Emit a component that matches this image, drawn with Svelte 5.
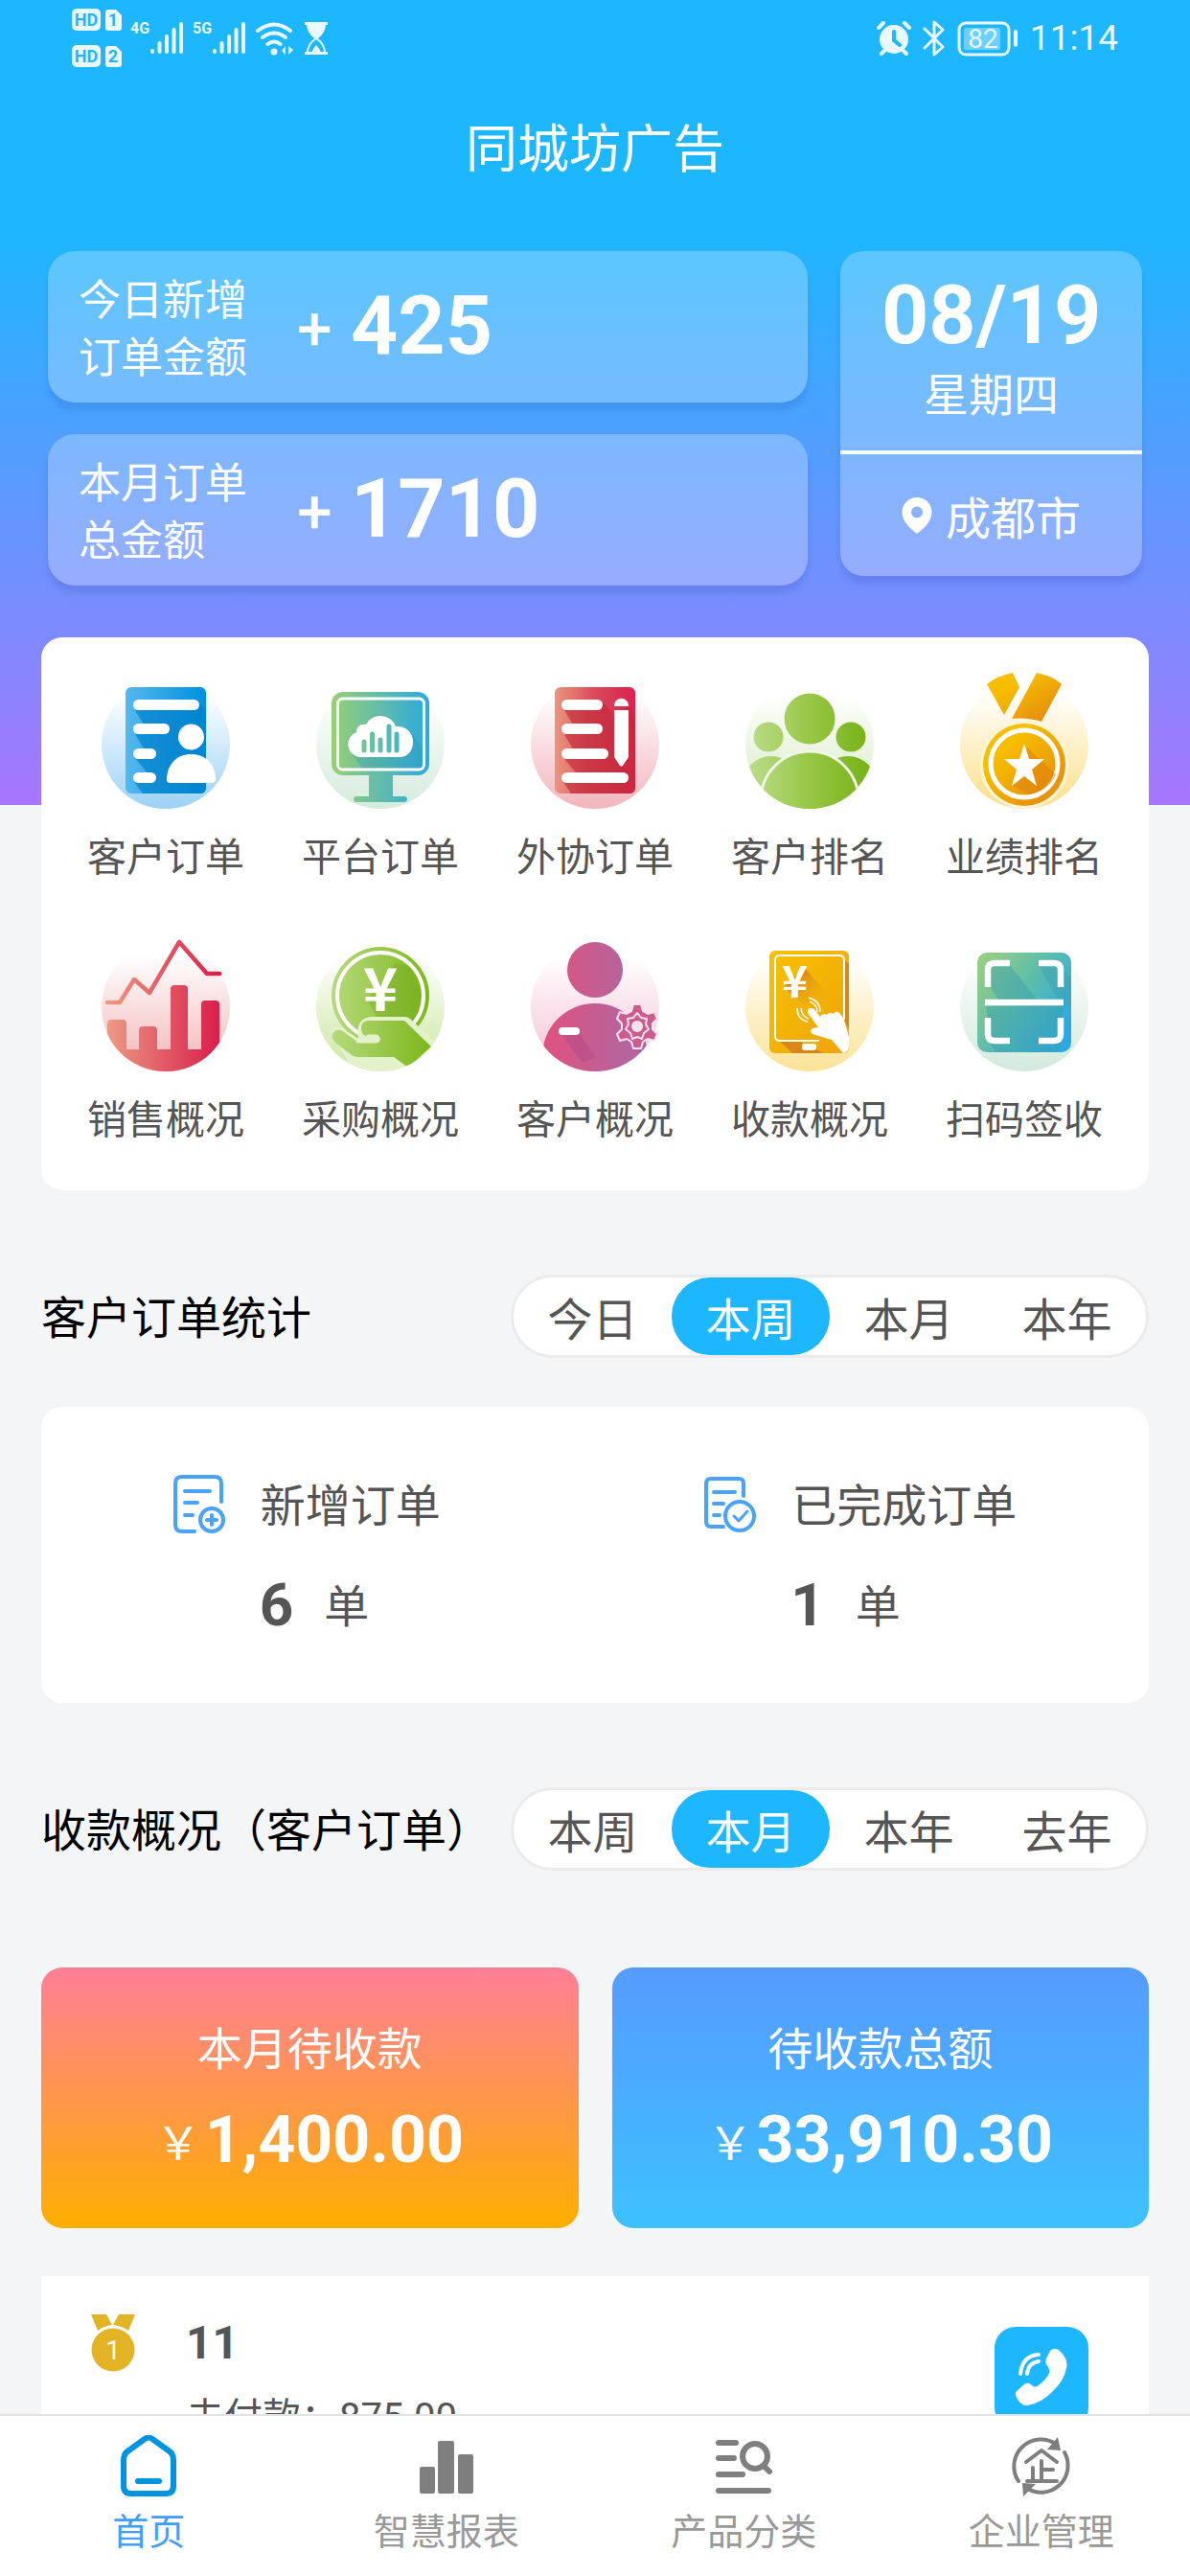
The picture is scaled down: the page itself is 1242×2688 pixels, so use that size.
<script lang="ts">
  const menu = [
    { icon: "order", label: "客户订单", tint: "#9bd2f5" },
    { icon: "platform", label: "平台订单", tint: "#d5ebdc" },
    { icon: "outsource", label: "外协订单", tint: "#f2b5bd" },
    { icon: "people", label: "客户排名", tint: "#d5ebc0" },
    { icon: "medal", label: "业绩排名", tint: "#fbdf86" },
    { icon: "sales", label: "销售概况", tint: "#f2b5b5" },
    { icon: "purchase", label: "采购概况", tint: "#cbe6a0" },
    { icon: "customer", label: "客户概况", tint: "#f5bfd5" },
    { icon: "receipt", label: "收款概况", tint: "#fbe396" },
    { icon: "scan", label: "扫码签收", tint: "#d3eadd" },
  ];

  const orderRanges = ["今日", "本周", "本月", "本年"];
  const moneyRanges = ["本周", "本月", "本年", "去年"];

  const tabs = [
    { icon: "home", label: "首页" },
    { icon: "report", label: "智慧报表" },
    { icon: "category", label: "产品分类" },
    { icon: "company", label: "企业管理" },
  ];

  let orderRange = $state("本周");
  let moneyRange = $state("本月");
  let activeTab = $state("home");
</script>

{#snippet signal()}
  <svg width="36" height="36" viewBox="0 0 36 36" fill="none" stroke="#e9f9ff" stroke-width="4" stroke-linecap="round">
    <path d="M3 31v1M10.500 23v9M18 16v16M25.500 9v23M33 3v29" />
  </svg>
{/snippet}

{#snippet sim(n)}
  <svg width="52" height="24" viewBox="0 0 52 24">
    <rect x="0" y="0" width="30" height="23" rx="5" fill="#e9f9ff" />
    <path d="M38 1h8l6 6v13a3 3 0 0 1-3 3h-11a3 3 0 0 1-3-3v-16a3 3 0 0 1 3-3z" fill="#e9f9ff" />
    <text x="15" y="18" class="sim-text" text-anchor="middle">HD</text>
    <text x="43" y="18" class="sim-text" text-anchor="middle">{n}</text>
  </svg>
{/snippet}

{#snippet range(items, current, pick)}
  <div class="range">
    {#each items as it (it)}
      <button class:active={it === current} onclick={() => pick(it)}>{it}</button>
    {/each}
  </div>
{/snippet}

{#snippet menuIcon(name, tint)}
  <svg class="menu-icon" viewBox="0 0 140 150" aria-hidden="true">
    <defs>
      <linearGradient id="tint-{name}" x1="0" y1="0" x2="0" y2="1">
        <stop offset="0.1" stop-color="#fff" />
        <stop offset="1" stop-color={tint} />
      </linearGradient>
      <clipPath id="clip-{name}"><circle cx="70" cy="79" r="67" /></clipPath>
    </defs>
    <circle cx="70" cy="79" r="67" fill="url(#tint-{name})" />

    {#if name === "order"}
      <defs>
        <linearGradient id="g-order"><stop offset="0" stop-color="#55b8ee" /><stop offset="1" stop-color="#0090df" /></linearGradient>
      </defs>
      <rect x="28" y="19" width="84" height="111" rx="6" fill="url(#g-order)" />
      <path d="M38 43l65-9 9 8v82q0 6-6 6H46l-9-12 20-2-19-23h15L38 68h15z" fill="#0080cc" opacity="0.7" />
      <g fill="#fff">
        <rect x="36" y="32" width="69" height="11" rx="5.500" />
        <rect x="36" y="57" width="38" height="11" rx="5.500" />
        <rect x="36" y="83" width="24" height="11" rx="5.500" />
        <rect x="36" y="108" width="24" height="11" rx="5.500" />
        <circle cx="96.500" cy="71" r="13.500" />
        <path d="M71 116c0-17 11-27 25.500-27S122 99 122 115q0 4-4 4H75q-4 0-4-3z" />
      </g>
    {:else if name === "platform"}
      <defs>
        <linearGradient id="g-platform" gradientUnits="userSpaceOnUse" x1="19" y1="0" x2="121" y2="0"><stop offset="0" stop-color="#98cf74" /><stop offset="1" stop-color="#2ba9e0" /></linearGradient>
      </defs>
      <rect x="19" y="24" width="102" height="87" rx="12" fill="url(#g-platform)" />
      <path d="M58 110h25v23H58z" fill="url(#g-platform)" />
      <rect x="42" y="133" width="56" height="6" rx="3" fill="url(#g-platform)" />
      <path d="M40 88l12 17h62V82L99 63z" fill="#2a93b5" opacity="0.3" />
      <rect x="25.500" y="31" width="90" height="74" rx="5" fill="none" stroke="#fff" stroke-width="3" />
      <path d="M48 92a13.500 13.500 0 0 1-3-26c0-6 5-9 10-8a17 17 0 0 1 31 2c10-1 18 6 18 16s-6 16-14 16z" fill="#fff" />
      <path d="M53 76v9M61.500 68v17M70 74v11M79 60v25M87 68v17" stroke="url(#g-platform)" stroke-width="5" stroke-linecap="round" />
    {:else if name === "outsource"}
      <defs>
        <linearGradient id="g-outsource"><stop offset="0" stop-color="#ec9580" /><stop offset="0.500" stop-color="#d9495a" /><stop offset="1" stop-color="#dc2150" /></linearGradient>
      </defs>
      <rect x="28" y="19" width="84" height="111" rx="6" fill="url(#g-outsource)" />
      <path d="M38 43l42-7 10 12 15-9 7 8v77q0 6-6 6H45l-8-12 20-2-19-22h15L38 68h15z" fill="#c12a38" opacity="0.65" />
      <g fill="#fff">
        <rect x="35" y="32" width="43" height="11" rx="5.500" />
        <rect x="35" y="57" width="43" height="11" rx="5.500" />
        <rect x="35" y="83" width="49" height="11" rx="5.500" />
        <rect x="35" y="108" width="70" height="11" rx="5.500" />
        <path d="M90 39c0-11 15-11 15 0zM90 43h15v49l-6 9q-1.500 1-3 0l-6-9z" />
      </g>
    {:else if name === "people"}
      <defs>
        <linearGradient id="g-people" gradientUnits="userSpaceOnUse" x1="12" y1="0" x2="128" y2="0"><stop offset="0" stop-color="#b8db84" /><stop offset="0.500" stop-color="#97c746" /><stop offset="1" stop-color="#7ab31a" /></linearGradient>
      </defs>
      <g fill="url(#g-people)" clip-path="url(#clip-people)">
        <circle cx="70" cy="52" r="26.500" />
        <circle cx="27" cy="71" r="15.500" />
        <circle cx="113" cy="71" r="15.500" />
        <circle cx="30" cy="121" r="30" />
        <circle cx="110" cy="121" r="30" />
        <circle cx="70" cy="137" r="51" stroke="#eff7e6" stroke-width="3" />
      </g>
    {:else if name === "medal"}
      <defs>
        <linearGradient id="g-medal" x2="1" y2="1"><stop offset="0.300" stop-color="#f7bd00" /><stop offset="0.800" stop-color="#e8930c" /></linearGradient>
      </defs>
      <path d="M31 16q11-9 27-12l7 15-16 29zM83 4q16 3 26 12L88 55q-15-5-31-3z" fill="url(#g-medal)" />
      <circle cx="70" cy="100" r="46" fill="#fff5d8" />
      <circle cx="70" cy="100" r="43" fill="url(#g-medal)" />
      <circle cx="70" cy="99" r="35" fill="none" stroke="#fff" stroke-width="5" />
      <path d="M73 82l30 28q-7 18-29 21l-16-9z" fill="#d98008" opacity="0.5" />
      <path d="M70 78l5 16h16l-13 11 5 17-13-10-13 10 5-17-13-11h16z" fill="#fff" />
    {:else if name === "sales"}
      <defs>
        <linearGradient id="g-sales" gradientUnits="userSpaceOnUse" x1="8" y1="0" x2="128" y2="0"><stop offset="0" stop-color="#ee9c85" /><stop offset="0.500" stop-color="#e25a66" /><stop offset="1" stop-color="#da1c4a" /></linearGradient>
      </defs>
      <path d="M9 74h13l15-24 16 14 31-53 29 33h13" fill="none" stroke="url(#g-sales)" stroke-width="4.500" stroke-linecap="round" stroke-linejoin="round" />
      <path d="M9 96q0-4 4-4h12q4 0 4 4v27h13v-20q0-4 4-4h11q4 0 4 4v20h14V60q0-4 4-4h10q4 0 4 4v63h14V76q0-4 4-4h11q4 0 4 4v70H9z" fill="url(#g-sales)" clip-path="url(#clip-sales)" />
    {:else if name === "purchase"}
      <defs>
        <linearGradient id="g-purchase" gradientUnits="userSpaceOnUse" x1="19" y1="0" x2="121" y2="0"><stop offset="0" stop-color="#b6da7c" /><stop offset="1" stop-color="#7eb71c" /></linearGradient>
      </defs>
      <circle cx="70" cy="67" r="51" fill="url(#g-purchase)" />
      <path d="M56 70l14-13 16-24 15 4 12 24-4 36-28-4-12 2z" fill="#74a91d" opacity="0.4" />
      <circle cx="70" cy="67" r="45" fill="none" stroke="#fff" stroke-width="4" />
      <text x="70" y="83" class="yen" font-size="62" text-anchor="middle">¥</text>
      <path d="M18 104q6-7 14-2l15 10q-4-23 16-23h33q3 0 6 3l24 22v36H44z" fill="#e3f2ca" clip-path="url(#clip-purchase)" />
      <path d="M22 104q5-3 10 1l14 10h21q4-1 2-5H58q-8-1-8-9t8-8h37l28 27-24 22-15-11H46q-3 0-6-2l-17-13q-6-6-1-12z" fill="url(#g-purchase)" clip-path="url(#clip-purchase)" />
      <path d="M46 115h19q3 0 3-3t-3-3h-8" fill="none" stroke="#e3f2ca" stroke-width="3" stroke-linecap="round" />
    {:else if name === "customer"}
      <defs>
        <linearGradient id="g-customer" gradientUnits="userSpaceOnUse" x1="18" y1="0" x2="126" y2="0"><stop offset="0" stop-color="#e0527f" /><stop offset="1" stop-color="#a86aa6" /></linearGradient>
      </defs>
      <circle cx="70" cy="40" r="29" fill="url(#g-customer)" />
      <circle cx="70" cy="130" r="55" fill="url(#g-customer)" clip-path="url(#clip-customer)" />
      <path d="M35 107l18-1 18 25-14 6z" fill="#a53f86" opacity="0.35" />
      <rect x="32" y="100" width="22" height="8" rx="4" fill="#fff" />
      <path d="M110 76h8l2 7 5 3 7-2 3 7-5 5v6l5 5-3 7-7-2-5 3-2 7h-8l-2-7-5-3-7 2-3-7 5-5v-6l-5-5 3-7 7 2 5-3z" fill="#cc5c90" stroke="#fbe3ec" stroke-width="2" stroke-linejoin="round" />
      <path d="M114 85l4 5 6 1-1 6 3 5-5 4-2 6-5-2-5 2-2-6-5-4 3-5-1-6 6-1z" fill="none" stroke="#fbe3ec" stroke-width="2" stroke-linejoin="round" />
      <circle cx="114" cy="99" r="6" fill="#fbe3ec" />
    {:else if name === "receipt"}
      <defs>
        <linearGradient id="g-receipt" x2="1" y2="1"><stop offset="0" stop-color="#f6c200" /><stop offset="1" stop-color="#f0a30b" /></linearGradient>
        <linearGradient id="g-receipt-shade" x2="1" y2="1"><stop offset="0.200" stop-color="#d98316" /><stop offset="0.700" stop-color="#f0ab08" stop-opacity="0" /></linearGradient>
      </defs>
      <rect x="28" y="20" width="83" height="107" rx="6" fill="url(#g-receipt)" />
      <path d="M106 29l5 5v68l-5-10zM38 114h24v9h15l8 4H52z" fill="#d27a1c" opacity="0.75" />
      <path d="M65 38l36 42-20 12-38-34z" fill="url(#g-receipt-shade)" />
      <path d="M80 114H39q-5 0-5-5V30q0-5 5-5h62q5 0 5 5v62" fill="none" stroke="#fff" stroke-width="2" />
      <rect x="62" y="117" width="15" height="7" rx="3" fill="#fff" />
      <text x="54.500" y="69" class="yen" font-size="46" text-anchor="middle">¥</text>
      <path d="M69 69q12 3 12 15M70 73q8 3 8 11M57 80q0 12 11 14M61 80q0 8 8 11" fill="none" stroke="#fff" stroke-width="1.500" />
      <path d="M68 85q-1-5 4-5 3 0 5 4l4 5q3-5 7-2 3-4 7-1 2-4 6-1 5 5 7 14l3 11v10q-1 6-6 7l-12-14-20-6q-4-3 0-6l6-1z" fill="#fff" />
    {:else}
      <defs>
        <linearGradient id="g-scan" x2="1" y2="0.700"><stop offset="0" stop-color="#9ed17c" /><stop offset="0.500" stop-color="#5fbea9" /><stop offset="1" stop-color="#2aa9e4" /></linearGradient>
      </defs>
      <rect x="21" y="22" width="98" height="104" rx="10" fill="url(#g-scan)" />
      <path d="M34 57V36h22l27 35H43zM85 36h22l12 12v30h-10zM30 78h80v40q-4 8-10 8H40L32 113V92z" fill="#3d9dab" opacity="0.45" />
      <g fill="none" stroke="#fff" stroke-width="6.500">
        <path d="M55 33H39q-7 0-7 7v18M85 33h16q7 0 7 7v18M55 114H39q-7 0-7-7V90M85 114h16q7 0 7-7V90M29 74h82" />
      </g>
    {/if}
  </svg>
{/snippet}

{#snippet tabIcon(name)}
  <svg width="64" height="66" viewBox="0 0 64 66" aria-hidden="true">
    {#if name === "home"}
      <path d="M6 26Q6 20 10 17L28 4q4-3 8 0l18 13q4 3 4 9v27q0 8-8 8H14q-8 0-8-8z" fill="none" stroke="#0093df" stroke-width="6" />
      <path d="M21 48h22" stroke="#0093df" stroke-width="6" stroke-linecap="round" />
    {:else if name === "report"}
      <path d="M4 35q0-2 2-2h12q2 0 2 2v24q0 2-2 2H6q-2 0-2-2zM23 8q0-2 2-2h13q2 0 2 2v51q0 2-2 2H25q-2 0-2-2zM44 22q0-2 2-2h12q2 0 2 2v37q0 2-2 2H46q-2 0-2-2z" fill="#7f7f7f" />
    {:else if name === "category"}
      <g fill="none" stroke="#7f7f7f" stroke-width="6" stroke-linecap="round">
        <path d="M6 8h18M6 24h16M6 41h25M6 58h52" />
        <circle cx="44" cy="22" r="13" />
        <path d="M53 32l6 6" />
      </g>
    {:else}
      <g fill="none" stroke="#7f7f7f" stroke-width="4" stroke-linecap="round">
        <path d="M8 48A28 28 0 0 1 48 10M56 18A28 28 0 0 1 16 55" />
      </g>
      <path d="M49 2l3 14-14-1zM13 64l-1-14 14 1z" fill="#7f7f7f" />
      <path d="M16 28L32 16l16 12M32 27v20M23 34v13M32 36h12M17 48h31" fill="none" stroke="#7f7f7f" stroke-width="4" stroke-linecap="round" stroke-linejoin="round" />
    {/if}
  </svg>
{/snippet}

<div class="app">
  <main>
    <div class="status">
      <div class="status-group">
        <div class="sims">
          {@render sim("1")}
          {@render sim("2")}
        </div>
        <div class="net"><span>4G</span>{@render signal()}</div>
        <div class="net"><span>5G</span>{@render signal()}</div>
        <svg width="42" height="36" viewBox="0 0 42 36">
          <g fill="none" stroke="#e9f9ff" stroke-width="4" stroke-linecap="round">
            <path d="M3 10q17-13 34 0M8 17q12-9 24 0M13.500 24q6.500-5 13 0" />
          </g>
          <circle cx="20" cy="32" r="3.500" fill="#e9f9ff" />
          <path d="M32 26v9l-4-4zM35 26v9l5-5z" fill="#e9f9ff" />
        </svg>
        <svg width="26" height="36" viewBox="0 0 26 36">
          <path d="M1 1h24v3H1zM1 32h24v3H1z" fill="#e9f9ff" />
          <path d="M3 3h20q0 9-8 15-2 1-4 0-8-6-8-15zM8 33q1-4 5-8 4 4 5 8z" fill="#e9f9ff" />
          <path d="M4 33q0-9 9-15 9 6 9 15" fill="none" stroke="#e9f9ff" stroke-width="2" />
        </svg>
      </div>
      <div class="status-group right">
        <svg width="36" height="36" viewBox="0 0 36 36">
          <circle cx="18" cy="19" r="15" fill="#e9f9ff" />
          <path d="M2 7l5-5M34 7l-5-5M8 31l-3 3M28 31l3 3" stroke="#e9f9ff" stroke-width="4" stroke-linecap="round" />
          <path d="M18 11v9l6 5" fill="none" stroke="#1cb7ff" stroke-width="4" stroke-linecap="round" />
        </svg>
        <svg width="24" height="38" viewBox="0 0 24 38">
          <path d="M2 9l19 19-9 8V2l9 8L2 29" fill="none" stroke="#e9f9ff" stroke-width="3" stroke-linejoin="round" stroke-linecap="round" />
        </svg>
        <svg width="64" height="38" viewBox="0 0 64 38">
          <rect x="2" y="3" width="52" height="33" rx="7" fill="none" stroke="#e9f9ff" stroke-width="3" />
          <rect x="7" y="8" width="38" height="23" rx="2" fill="#fff" opacity="0.35" />
          <rect x="59" y="10" width="4" height="18" rx="2" fill="#e9f9ff" />
          <text x="27" y="29" class="battery" text-anchor="middle">82</text>
        </svg>
        <span class="clock">11:14</span>
      </div>
    </div>

    <h1>同城坊广告</h1>

    <div class="summary">
      <div class="totals">
        <div class="glass total">
          <div class="total-label">今日新增<br />订单金额</div>
          <span class="plus">+</span>
          <strong>425</strong>
        </div>
        <div class="glass total">
          <div class="total-label">本月订单<br />总金额</div>
          <span class="plus">+</span>
          <strong>1710</strong>
        </div>
      </div>
      <div class="glass today">
        <div class="date">
          <strong>08/19</strong>
          <span>星期四</span>
        </div>
        <div class="city">
          <svg width="32" height="38" viewBox="0 0 32 38">
            <path fill-rule="evenodd" d="M16 0a15.500 15.500 0 0 1 15.500 15.500C31.500 26 21 34 16 38 11 34 .5 26 .5 15.500A15.500 15.500 0 0 1 16 0zm0 9.500a6 6 0 1 0 0 12 6 6 0 0 0 0-12z" fill="#fff" />
          </svg>
          <span>成都市</span>
        </div>
      </div>
    </div>

    <nav class="menu">
      {#each menu as m (m.icon)}
        <a href="#{m.icon}">
          {@render menuIcon(m.icon, m.tint)}
          <span>{m.label}</span>
        </a>
      {/each}
    </nav>

    <div class="section-head">
      <h2>客户订单统计</h2>
      {@render range(orderRanges, orderRange, (v) => (orderRange = v))}
    </div>

    <div class="stats">
      <div class="stat">
        <div class="stat-title">
          <svg width="54" height="62" viewBox="0 0 54 62" fill="none" stroke="#49a3fb" stroke-width="4" stroke-linecap="round">
            <path d="M50 28V9q0-7-7-7H9Q2 2 2 9v43q0 7 7 7h13M12 17h26M12 29h13M12 42h8" />
            <circle cx="40" cy="47" r="12" />
            <path d="M40 42v10M35 47h10" />
          </svg>
          <span>新增订单</span>
        </div>
        <div class="stat-value"><strong>6</strong><span>单</span></div>
      </div>
      <div class="stat">
        <div class="stat-title">
          <svg width="54" height="62" viewBox="0 0 54 62" fill="none" stroke="#49a3fb" stroke-width="4" stroke-linecap="round" stroke-linejoin="round">
            <path d="M41 22V9q0-5-5-5H7Q2 4 2 9v40q0 5 5 5h13M10 18h22M10 30h10M10 42h6" />
            <circle cx="37" cy="43" r="15" />
            <path d="M31 43l5 5 9-10" stroke-width="3" />
          </svg>
          <span>已完成订单</span>
        </div>
        <div class="stat-value"><strong>1</strong><span>单</span></div>
      </div>
    </div>

    <div class="section-head">
      <h2>收款概况（客户订单）</h2>
      {@render range(moneyRanges, moneyRange, (v) => (moneyRange = v))}
    </div>

    <div class="money">
      <div class="money-card warm">
        <span>本月待收款</span>
        <div class="amount"><span>￥</span><strong>1,400.00</strong></div>
      </div>
      <div class="money-card cool">
        <span>待收款总额</span>
        <div class="amount"><span>￥</span><strong>33,910.30</strong></div>
      </div>
    </div>

    <div class="debtor">
      <svg class="rank" width="46" height="60" viewBox="0 0 46 60">
        <path d="M0 0h16l6 11q-9 1-15 6zM46 0H29l-6 11q9 1 16 6z" fill="#e1b325" />
        <circle cx="23" cy="37" r="22.500" fill="#e1b325" />
        <text x="23" y="47" class="rank-text" text-anchor="middle">1</text>
      </svg>
      <div class="debtor-info">
        <strong>11</strong>
        <span>未付款：<span class="num">875.00</span></span>
      </div>
      <button class="call" aria-label="拨打电话">
        <svg width="60" height="62" viewBox="0 0 60 62">
          <path d="M39 3q6-5 11 1 8 8 6 17-2 12-13 23Q31 57 16 60q-6 1-10-5-5-6-2-10l8-7q4-3 8 1 3 3 7 0 8-6 11-13 1-3-1-6-4-4-2-9z" fill="#fff" />
          <path d="M8 27Q10 8 27 7M15 27q1-11 12-13" fill="none" stroke="#fff" stroke-width="4" stroke-linecap="round" />
        </svg>
      </button>
    </div>
  </main>

  <nav class="tabbar">
    {#each tabs as t (t.icon)}
      <a href="#{t.icon}" class:active={t.icon === activeTab} onclick={() => (activeTab = t.icon)}>
        {@render tabIcon(t.icon)}
        <span>{t.label}</span>
      </a>
    {/each}
  </nav>
</div>

<style>
  .app {
    display: flex;
    flex-direction: column;
    height: 100vh;
    font-family: "Noto Sans CJK SC", "Noto Sans", sans-serif;
    color: #555;
    background: #f3f5f7;
  }
  main {
    flex: 1;
    min-height: 0;
    overflow-y: auto;
    scrollbar-width: none;
    background: linear-gradient(#1cb7ff 235px, #a876ff 840px, #f3f5f7 840px);
  }
  h1,
  h2 {
    margin: 0;
    font-weight: 400;
  }
  a {
    color: inherit;
    text-decoration: none;
  }
  strong,
  .num {
    font-family: Roboto, sans-serif;
  }

  /* status bar */
  .status {
    display: flex;
    justify-content: space-between;
    height: 80px;
    padding: 0 75px;
    color: #e9f9ff;
    font-family: Roboto, sans-serif;
  }
  .status-group {
    display: flex;
    align-items: center;
    gap: 9px;
  }
  .status-group.right {
    gap: 12px;
  }
  .sims {
    display: flex;
    flex-direction: column;
    gap: 14px;
  }
  .sim-text {
    font: 700 18px Roboto, sans-serif;
    fill: #1cb7ff;
  }
  .net {
    display: flex;
  }
  .net span {
    font-size: 16px;
    line-height: 16px;
    font-weight: 700;
  }
  .battery {
    font: 400 28px Roboto, sans-serif;
    fill: #e9f9ff;
  }
  .clock {
    font-size: 37px;
    line-height: 48px;
  }

  h1 {
    margin: 32px 0 70px;
    font-size: 54px;
    line-height: 80px;
    text-align: center;
    color: #fff;
  }

  /* summary */
  .summary {
    display: grid;
    grid-template-columns: 63fr 25fr;
    gap: 34px;
    align-items: start;
    padding: 0 50px;
    color: #fff;
  }
  .totals {
    display: flex;
    flex-direction: column;
    gap: 33px;
  }
  .glass {
    background: rgba(255, 255, 255, 0.26);
    border-radius: 28px;
    box-shadow: 0 8px 6px rgba(30, 60, 140, 0.14);
  }
  .total {
    display: flex;
    align-items: center;
    padding: 18px 32px 20px;
  }
  .total-label {
    width: 228px;
    font-size: 44px;
    line-height: 60px;
  }
  .plus {
    width: 56px;
    font-size: 62px;
    line-height: 80px;
    font-weight: 700;
  }
  .total strong {
    font-size: 86px;
    line-height: 100px;
  }
  .today {
    border-radius: 24px;
    text-align: center;
  }
  .date {
    display: flex;
    flex-direction: column;
    padding: 19px 0 29px;
    border-bottom: 4px solid #fff;
  }
  .date strong {
    font-size: 86px;
    line-height: 96px;
  }
  .date span {
    font-size: 47px;
    line-height: 64px;
  }
  .city {
    display: flex;
    align-items: center;
    justify-content: center;
    gap: 14px;
    height: 127px;
    font-size: 47px;
  }

  /* menu */
  .menu {
    display: grid;
    grid-template-columns: repeat(5, 1fr);
    row-gap: 56px;
    margin: 54px 43px 0;
    padding: 33px 18px 52px;
    background: #fff;
    border-radius: 22px;
  }
  .menu a {
    display: flex;
    flex-direction: column;
    align-items: center;
    gap: 18px;
    font-size: 41px;
    line-height: 50px;
  }
  .menu-icon {
    width: 140px;
    height: 150px;
  }
  .yen {
    font-weight: 700;
    fill: #fff;
  }

  /* sections */
  .section-head {
    display: flex;
    align-items: center;
    justify-content: space-between;
    margin: 88px 43px 0;
  }
  h2 {
    padding-bottom: 4px;
    font-size: 47px;
    line-height: 64px;
    white-space: nowrap;
    color: #000;
  }
  .range {
    display: flex;
    border: 3px solid #ebebeb;
    border-radius: 44px;
    background: #fff;
  }
  .range button {
    width: 165px;
    padding: 0;
    border: none;
    border-radius: 40px;
    background: none;
    font: inherit;
    font-size: 47px;
    line-height: 81px;
    color: #555;
    cursor: pointer;
  }
  .range button.active {
    background: #1cb7ff;
    color: #fff;
  }

  .stats {
    display: flex;
    justify-content: space-around;
    margin: 51px 43px 0;
    padding: 66px 0;
    background: #fff;
    border-radius: 22px;
    font-size: 47px;
    line-height: 72px;
  }
  .stat {
    display: flex;
    flex-direction: column;
    gap: 33px;
  }
  .stat-title {
    display: flex;
    align-items: center;
    gap: 37px;
  }
  .stat-title span,
  .stat-value span {
    padding-bottom: 4px;
    line-height: 68px;
  }
  .stat-value {
    display: flex;
    align-items: center;
    gap: 32px;
    padding-left: 90px;
  }
  .stat-value strong {
    font-size: 62px;
  }

  .money {
    display: grid;
    grid-template-columns: 1fr 1fr;
    gap: 35px;
    margin: 101px 43px 0;
  }
  .money-card {
    padding: 52px 0;
    border-radius: 22px;
    text-align: center;
    font-size: 47px;
    line-height: 60px;
    color: #fff;
  }
  .warm {
    background: linear-gradient(#ff7f96, #ffae00);
  }
  .cool {
    background: linear-gradient(#559bff, #3dc1ff);
  }
  .amount {
    display: flex;
    align-items: center;
    justify-content: center;
    gap: 4px;
    margin-top: 28px;
    line-height: 80px;
  }
  .amount strong {
    font-size: 68px;
  }

  .debtor {
    display: flex;
    align-items: flex-start;
    margin: 50px 43px 0;
    padding: 40px 63px 60px 52px;
    background: #fff;
  }
  .rank-text {
    font: 400 28px Roboto, sans-serif;
    fill: #fff;
  }
  .debtor-info {
    flex: 1;
    display: flex;
    flex-direction: column;
    gap: 14px;
    margin-left: 53px;
    font-size: 40px;
    line-height: 60px;
  }
  .debtor-info strong {
    font-size: 48px;
  }
  .call {
    display: flex;
    align-items: center;
    justify-content: center;
    width: 98px;
    height: 106px;
    margin-top: 13px;
    padding: 0;
    border: none;
    border-radius: 22px;
    background: #1cb7ff;
  }

  .tabbar {
    display: grid;
    grid-template-columns: repeat(4, 1fr);
    padding: 20px 0 24px;
    border-top: 2px solid #e2e5e8;
    background: #fff;
  }
  .tabbar a {
    display: flex;
    flex-direction: column;
    align-items: center;
    gap: 7px;
    font-size: 38px;
    line-height: 50px;
    color: #999;
  }
  .tabbar a.active {
    color: #409eff;
  }
</style>
